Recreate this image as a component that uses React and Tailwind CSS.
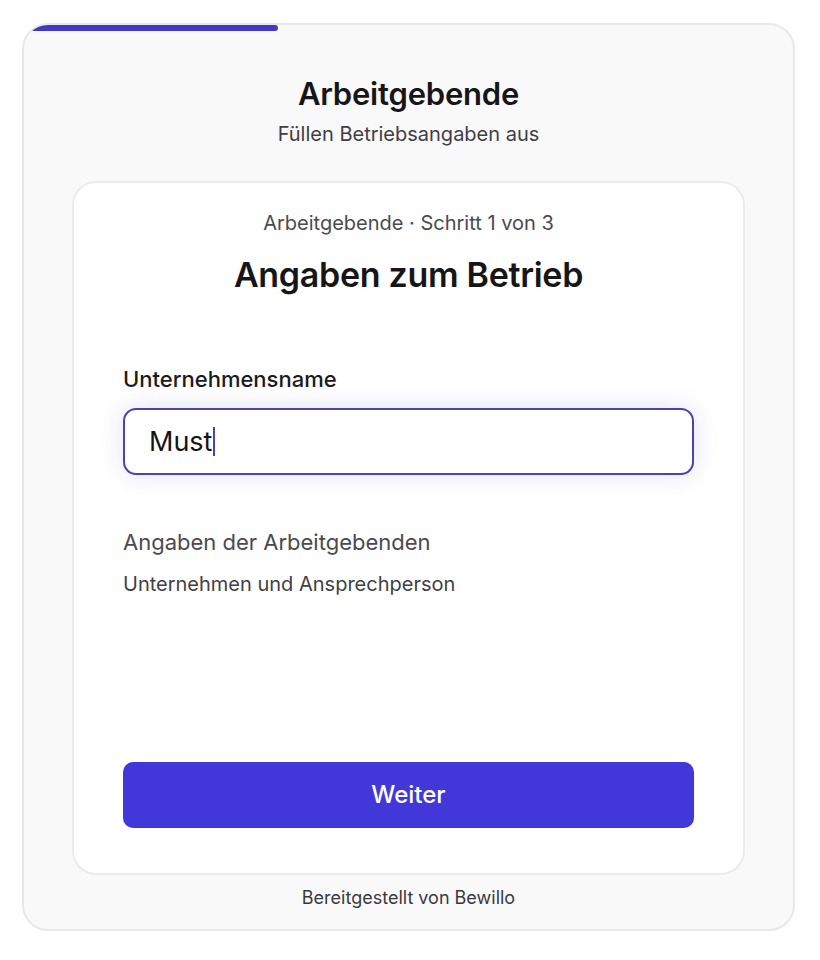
import React from 'react';

export default function App() {
  return (
    <div className="min-h-[960px] bg-white px-[22px] pt-[23px] font-['Inter',sans-serif]">
      <div className="relative w-[773px] overflow-hidden rounded-[26px] border-2 border-[#e8e8ea] bg-[#f9f9fa]">
        {/* progress */}
        <div className="absolute left-0 top-0 h-[6px] w-[254px] rounded-full bg-[#4137c8]" />

        <div className="flex flex-col items-center pt-[51px]">
          <h1 className="text-[31px] font-semibold leading-[36px] tracking-[-0.2px] text-[#161618]">Arbeitgebende</h1>
          <p className="mt-[10px] text-[20px] leading-[24px] text-[#3f3f44]">Füllen Betriebsangaben aus</p>

          <div className="mt-[35px] flex h-[694px] w-[673px] flex-col rounded-[24px] border-2 border-[#ebebed] bg-white px-[49px] pb-[45px] pt-[28px]">
            <p className="text-center text-[20px] leading-[24px] text-[#4a4a4f]">Arbeitgebende · Schritt 1 von 3</p>
            <h2 className="mt-[20px] text-center text-[34px] font-semibold leading-[40px] tracking-[-0.3px] text-[#161618]">Angaben zum Betrieb</h2>

            <label className="mt-[70px] text-[22px] font-medium leading-[28px] text-[#1b1b1f]">Unternehmensname</label>
            <div className="mt-[15px] flex h-[67px] items-center rounded-[13px] border-2 border-[#4c42b3] bg-white px-[24px] shadow-[0_0_24px_rgba(99,88,230,0.18)]">
              <span className="text-[27px] leading-none text-[#141416]">Must</span>
              <span className="ml-[1px] h-[29px] w-[2px] bg-[#4c42b3]" />
            </div>

            <p className="mt-[53px] text-[22px] leading-[28px] text-[#4a4a4f]">Angaben der Arbeitgebenden</p>
            <p className="mt-[15px] text-[20px] leading-[26px] text-[#3f3f44]">Unternehmen und Ansprechperson</p>

            <div className="flex-1" />
            <button className="h-[66px] w-full rounded-[10px] bg-[#4238da] text-[24px] font-medium text-white">Weiter</button>
          </div>

          <p className="mb-[20px] mt-[12px] text-[18px] leading-[22px] text-[#3a3a3e]">Bereitgestellt von Bewillo</p>
        </div>
      </div>
    </div>
  );
}
